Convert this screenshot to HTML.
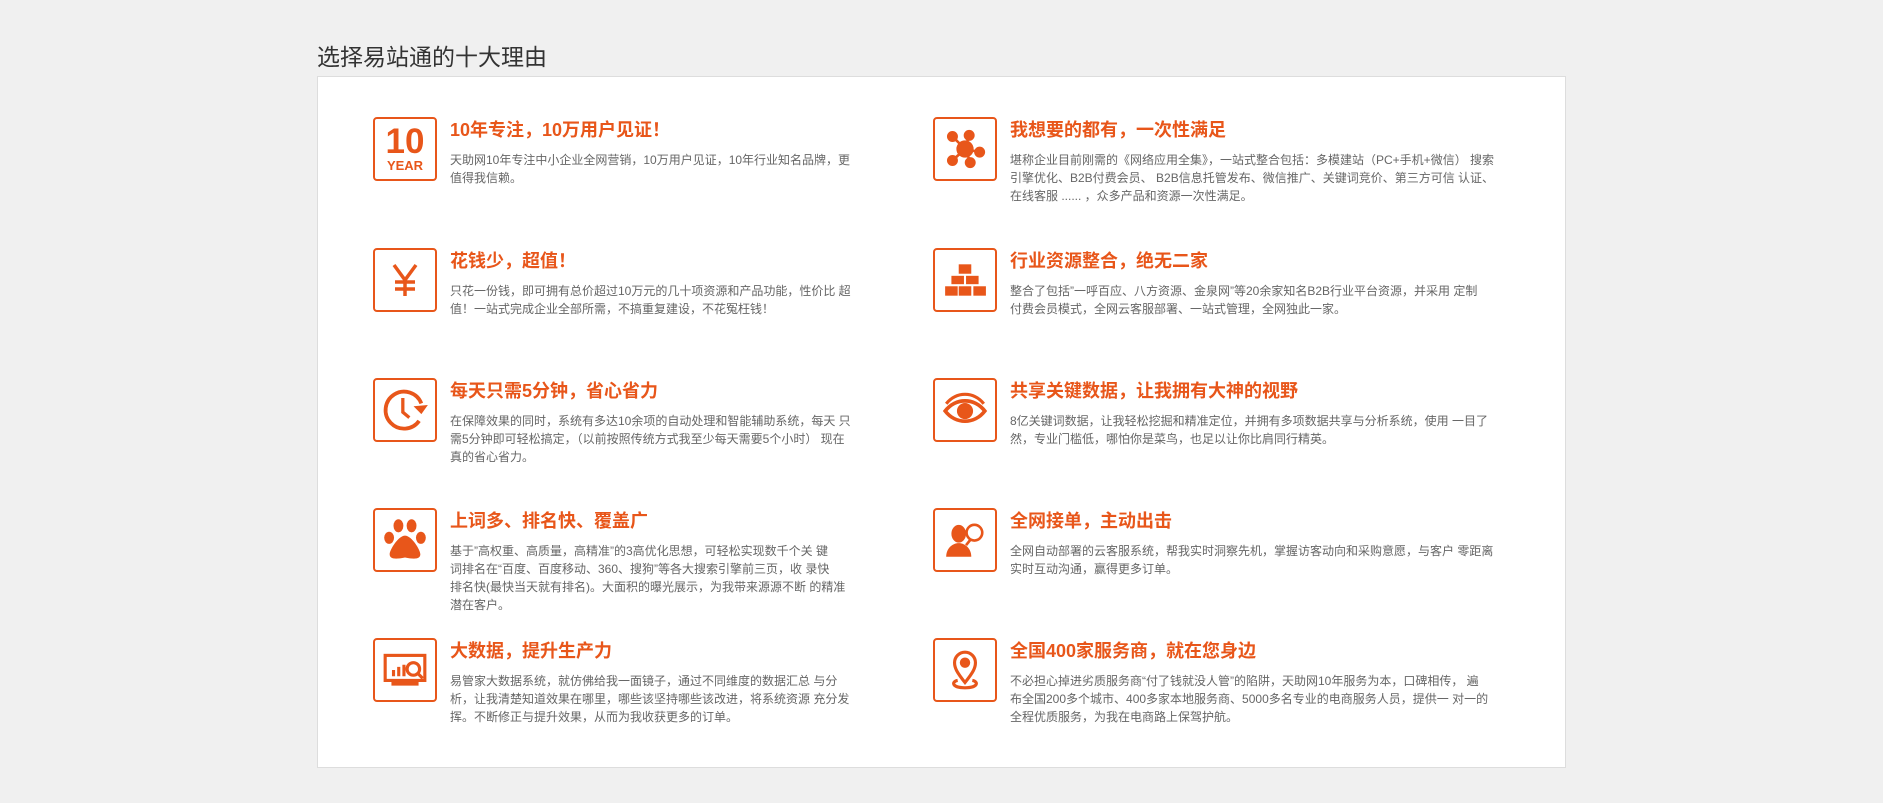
<!DOCTYPE html>
<html><head><meta charset="utf-8"><style>
body{margin:0;background:#f0f0f0;width:1883px;height:803px;position:relative;font-family:"Liberation Sans","Noto Sans CJK SC",sans-serif;overflow:hidden}
.h{position:absolute;left:317px;top:38px;font-size:23px;color:#333}
.box{position:absolute;left:317px;top:76px;width:1247px;height:690px;background:#fff;border:1px solid #ddd}
.it{position:absolute}
.ic{position:absolute;left:0;top:0;width:60px;height:60px;border:2.5px solid #e8561a;border-radius:4px;display:flex;align-items:center;justify-content:center}
.t{position:absolute;left:77px;top:1px;font-size:18px;font-weight:bold;color:#e8561a;white-space:nowrap;line-height:24px}
.d{position:absolute;left:77px;top:34px;font-size:12px;line-height:18px;color:#666;white-space:nowrap}
</style></head><body>
<div class="h">选择易站通的十大理由</div>
<div class="box"></div>

<div class="it" style="left:373px;top:117px">
<div class="ic" style="flex-direction:column;color:#e8561a;font-weight:bold"><div style="font-size:35px;line-height:32px">10</div><div style="font-size:13px;line-height:15px">YEAR</div></div>
<div class="t">10年专注，10万用户见证！</div>
<div class="d">天助网10年专注中小企业全网营销，10万用户见证，10年行业知名品牌，更<br>值得我信赖。</div></div>

<div class="it" style="left:373px;top:248px">
<div class="ic"><svg width="40" height="40" viewBox="0 0 40 40" fill="none" stroke="#e8561a" stroke-width="3.5"><path d="M9 5l11 15 11-15M20 20v16M10 22h20M10 29h20"/></svg></div>
<div class="t">花钱少，超值！</div>
<div class="d">只花一份钱，即可拥有总价超过10万元的几十项资源和产品功能，性价比 超<br>值！一站式完成企业全部所需，不搞重复建设，不花冤枉钱！</div></div>

<div class="it" style="left:373px;top:378px">
<div class="ic"><svg width="50" height="50" viewBox="0 0 46 46" fill="none" stroke="#e8561a" stroke-width="3.5"><path d="M38 17A17 17 0 1 0 36 33"/><path d="M21 12v13l6 5" stroke-width="3"/><path d="M32 20l6 6 5-7z" fill="#e8561a" stroke-width="1"/></svg></div>
<div class="t">每天只需5分钟，省心省力</div>
<div class="d">在保障效果的同时，系统有多达10余项的自动处理和智能辅助系统，每天 只<br>需5分钟即可轻松搞定，（以前按照传统方式我至少每天需要5个小时） 现在<br>真的省心省力。</div></div>

<div class="it" style="left:373px;top:508px">
<div class="ic"><svg width="46" height="44" viewBox="0 0 42 40" fill="#e8561a"><ellipse cx="15" cy="7" rx="4.5" ry="6"/><ellipse cx="27" cy="7" rx="4.5" ry="6"/><ellipse cx="6.5" cy="18" rx="4.5" ry="5.5"/><ellipse cx="35.5" cy="18" rx="4.5" ry="5.5"/><path d="M21 16c-6 0-14 13-14 17s4 5 14 3c10 2 14 1 14-3s-8-17-14-17z"/></svg></div>
<div class="t">上词多、排名快、覆盖广</div>
<div class="d">基于”高权重、高质量，高精准”的3高优化思想，可轻松实现数千个关 键<br>词排名在“百度、百度移动、360、搜狗”等各大搜索引擎前三页，收 录快<br>排名快(最快当天就有排名)。大面积的曝光展示，为我带来源源不断 的精准<br>潜在客户。</div></div>

<div class="it" style="left:373px;top:638px">
<div class="ic"><svg width="48" height="42" viewBox="0 0 46 40" fill="none" stroke="#e8561a" stroke-width="3"><rect x="4" y="6" width="38" height="24"/><path d="M10 33h26" stroke-width="4"/><path d="M12 26v-6M17 26v-9M22 26v-11" stroke-width="3"/><circle cx="31" cy="19" r="6"/><path d="M35 23l5 5"/></svg></div>
<div class="t">大数据，提升生产力</div>
<div class="d">易管家大数据系统，就仿佛给我一面镜子，通过不同维度的数据汇总 与分<br>析，让我清楚知道效果在哪里，哪些该坚持哪些该改进，将系统资源 充分发<br>挥。不断修正与提升效果，从而为我收获更多的订单。</div></div>

<div class="it" style="left:933px;top:117px">
<div class="ic"><svg width="46" height="46" viewBox="0 0 44 44" fill="#e8561a" stroke="#e8561a" stroke-width="2.5"><path d="M22 22L10 10M22 22L26 9M22 22l14 3M22 22L10 33M22 22l5 12"/><circle cx="22" cy="22" r="7"/><circle cx="10" cy="10" r="4"/><circle cx="26" cy="9" r="4"/><circle cx="36" cy="25" r="4"/><circle cx="10" cy="33" r="4"/><circle cx="27" cy="35" r="4"/></svg></div>
<div class="t">我想要的都有，一次性满足</div>
<div class="d">堪称企业目前刚需的《网络应用全集》，一站式整合包括：多模建站（PC+手机+微信） 搜索<br>引擎优化、B2B付费会员、 B2B信息托管发布、微信推广、关键词竞价、第三方可信 认证、<br>在线客服 ...... ，众多产品和资源一次性满足。</div></div>

<div class="it" style="left:933px;top:248px">
<div class="ic"><svg width="46" height="42" viewBox="0 0 44 40" fill="#e8561a"><rect x="16" y="5" width="12" height="9"/><rect x="9" y="16" width="12" height="8"/><rect x="23" y="16" width="12" height="8"/><rect x="3" y="26" width="12" height="9"/><rect x="16" y="26" width="12" height="9"/><rect x="30" y="26" width="12" height="9"/></svg></div>
<div class="t">行业资源整合，绝无二家</div>
<div class="d">整合了包括”一呼百应、八方资源、金泉网”等20余家知名B2B行业平台资源，并采用 定制<br>付费会员模式，全网云客服部署、一站式管理，全网独此一家。</div></div>

<div class="it" style="left:933px;top:378px">
<div class="ic"><svg width="48" height="42" viewBox="0 0 46 40" fill="none" stroke="#e8561a" stroke-width="3.5"><path d="M4 21c10-13 28-13 38 0c-10 13-28 13-38 0z"/><circle cx="23" cy="21" r="6" fill="#e8561a"/><path d="M5 14c10-12 26-12 36 0" stroke-width="3"/></svg></div>
<div class="t">共享关键数据，让我拥有大神的视野</div>
<div class="d">8亿关键词数据，让我轻松挖掘和精准定位，并拥有多项数据共享与分析系统，使用 一目了<br>然，专业门槛低，哪怕你是菜鸟，也足以让你比肩同行精英。</div></div>

<div class="it" style="left:933px;top:508px">
<div class="ic"><svg width="46" height="46" viewBox="0 0 44 44"><ellipse cx="16" cy="16" rx="7" ry="8.5" fill="#e8561a"/><path d="M4 38c0-8 6-13 12-13s12 5 12 13z" fill="#e8561a"/><circle cx="31" cy="15" r="7.5" fill="none" stroke="#e8561a" stroke-width="2.5"/><path d="M27 22l-4 5" stroke="#e8561a" stroke-width="2.5"/></svg></div>
<div class="t">全网接单，主动出击</div>
<div class="d">全网自动部署的云客服系统，帮我实时洞察先机，掌握访客动向和采购意愿，与客户 零距离<br>实时互动沟通，赢得更多订单。</div></div>

<div class="it" style="left:933px;top:638px">
<div class="ic"><svg width="42" height="46" viewBox="0 0 40 44" fill="none" stroke="#e8561a" stroke-width="3"><path d="M20 34C12 24 10 20 10 15a10 10 0 0 1 20 0c0 5-2 9-10 19z"/><circle cx="20" cy="15" r="3.5" fill="#e8561a"/><path d="M13 32c-6 1-6 7 7 7s13-6 7-7"/></svg></div>
<div class="t">全国400家服务商，就在您身边</div>
<div class="d">不必担心掉进劣质服务商“付了钱就没人管”的陷阱，天助网10年服务为本，口碑相传， 遍<br>布全国200多个城市、400多家本地服务商、5000多名专业的电商服务人员，提供一 对一的<br>全程优质服务，为我在电商路上保驾护航。</div></div>
</body></html>
